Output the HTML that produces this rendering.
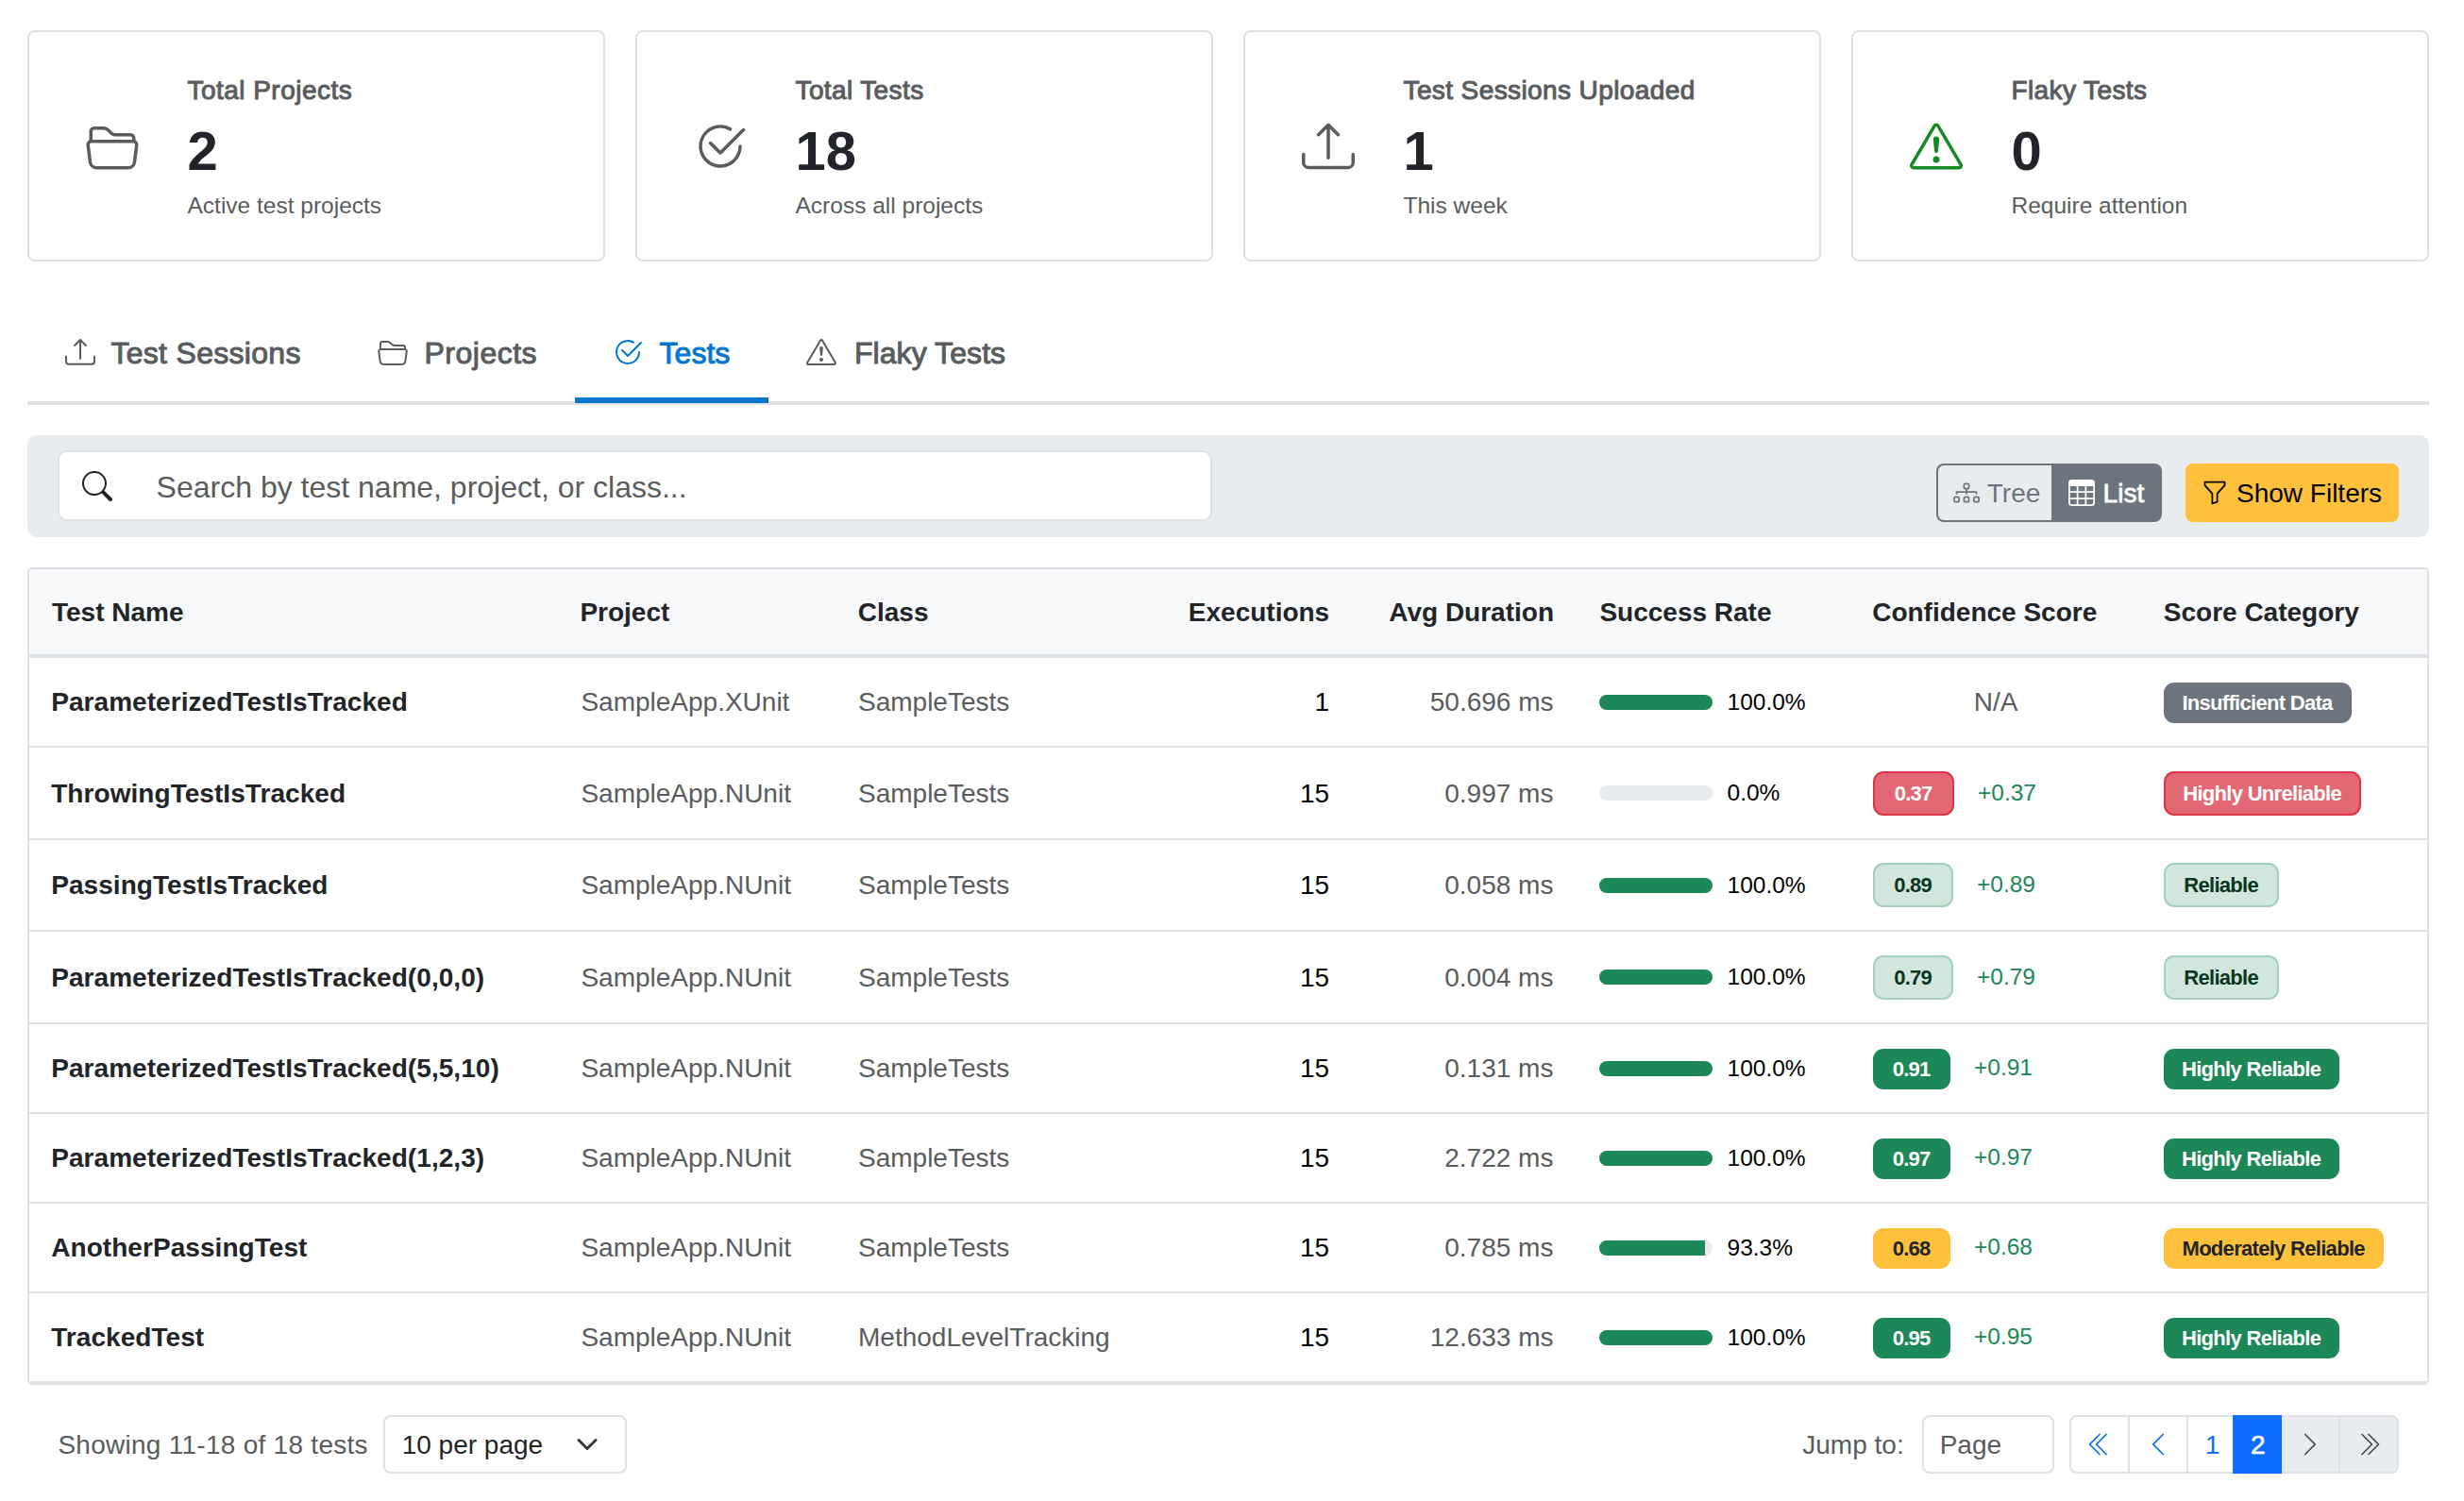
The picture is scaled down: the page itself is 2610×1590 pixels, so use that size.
<!DOCTYPE html>
<html><head><meta charset="utf-8"><title>Tests</title>
<style>
html,body{margin:0;padding:0;background:#fff;overflow:hidden;}
body{width:2610px;height:1590px;position:relative;overflow:hidden;font-family:"Liberation Sans",sans-serif;}
.t{position:absolute;white-space:nowrap;}
.r{position:absolute;}
.i{position:absolute;display:block;}
</style></head><body>
<div class="r" style="left:29px;top:32px;width:612px;height:245px;background:#fff;border:2px solid #dee2e6;border-radius:8px;box-sizing:border-box;"></div>
<svg class="i" style="left:91.00px;top:127.00px" width="56" height="56" viewBox="0 0 16 16" fill="#595c5f"><path d="M1 3.5A1.5 1.5 0 0 1 2.5 2h2.764c.958 0 1.76.56 2.311 1.184C7.985 3.648 8.48 4 9 4h4.5A1.5 1.5 0 0 1 15 5.5v.64c.57.265.94.876.856 1.546l-.64 5.124A2.5 2.5 0 0 1 12.733 15H3.266a2.5 2.5 0 0 1-2.481-2.19l-.64-5.124A1.5 1.5 0 0 1 1 6.14zM2 6h12v-.5a.5.5 0 0 0-.5-.5H9c-.964 0-1.71-.629-2.174-1.154C6.374 3.334 5.82 3 5.264 3H2.5a.5.5 0 0 0-.5.5zm-.367 1a.5.5 0 0 0-.496.562l.64 5.124A1.5 1.5 0 0 0 3.266 14h9.468a1.5 1.5 0 0 0 1.489-1.314l.64-5.124A.5.5 0 0 0 14.367 7z"/></svg>
<div class="t" style="left:198.50px;top:82.10px;font-size:28px;line-height:28px;font-weight:400;color:#595c5f;letter-spacing:0.466px;-webkit-text-stroke:1.0px #595c5f;">Total Projects</div>
<div class="t" style="left:198.50px;top:130.80px;font-size:58px;line-height:58px;font-weight:700;color:#212529;">2</div>
<div class="t" style="left:198.50px;top:206.46px;font-size:24.5px;line-height:24.5px;font-weight:400;color:#595c5f;">Active test projects</div>
<div class="r" style="left:673px;top:32px;width:612px;height:245px;background:#fff;border:2px solid #dee2e6;border-radius:8px;box-sizing:border-box;"></div>
<svg class="i" style="left:735.00px;top:127.00px" width="56" height="56" viewBox="0 0 16 16" fill="#595c5f"><path d="M2.5 8a5.5 5.5 0 0 1 8.25-4.764.5.5 0 0 0 .5-.866A6.5 6.5 0 1 0 14.5 8a.5.5 0 0 0-1 0 5.5 5.5 0 1 1-11 0"/><path d="M15.354 3.354a.5.5 0 0 0-.708-.708L8 9.293 5.354 6.646a.5.5 0 1 0-.708.708l3 3a.5.5 0 0 0 .708 0z"/></svg>
<div class="t" style="left:842.50px;top:82.10px;font-size:28px;line-height:28px;font-weight:400;color:#595c5f;letter-spacing:0.386px;-webkit-text-stroke:1.0px #595c5f;">Total Tests</div>
<div class="t" style="left:842.50px;top:130.80px;font-size:58px;line-height:58px;font-weight:700;color:#212529;">18</div>
<div class="t" style="left:842.50px;top:206.46px;font-size:24.5px;line-height:24.5px;font-weight:400;color:#595c5f;">Across all projects</div>
<div class="r" style="left:1317px;top:32px;width:612px;height:245px;background:#fff;border:2px solid #dee2e6;border-radius:8px;box-sizing:border-box;"></div>
<svg class="i" style="left:1379.00px;top:127.00px" width="56" height="56" viewBox="0 0 16 16" fill="#595c5f"><path d="M.5 9.9a.5.5 0 0 1 .5.5v2.5a1 1 0 0 0 1 1h12a1 1 0 0 0 1-1v-2.5a.5.5 0 0 1 1 0v2.5a2 2 0 0 1-2 2H2a2 2 0 0 1-2-2v-2.5a.5.5 0 0 1 .5-.5"/><path d="M7.646 1.146a.5.5 0 0 1 .708 0l3 3a.5.5 0 0 1-.708.708L8.5 2.707V11.5a.5.5 0 0 1-1 0V2.707L5.354 4.854a.5.5 0 1 1-.708-.708z"/></svg>
<div class="t" style="left:1486.50px;top:82.10px;font-size:28px;line-height:28px;font-weight:400;color:#595c5f;letter-spacing:0.398px;-webkit-text-stroke:1.0px #595c5f;">Test Sessions Uploaded</div>
<div class="t" style="left:1486.50px;top:130.80px;font-size:58px;line-height:58px;font-weight:700;color:#212529;">1</div>
<div class="t" style="left:1486.50px;top:206.46px;font-size:24.5px;line-height:24.5px;font-weight:400;color:#595c5f;">This week</div>
<div class="r" style="left:1961px;top:32px;width:612px;height:245px;background:#fff;border:2px solid #dee2e6;border-radius:8px;box-sizing:border-box;"></div>
<svg class="i" style="left:2023.00px;top:127.00px" width="56" height="56" viewBox="0 0 16 16" fill="#138a22"><path d="M7.938 2.016A.13.13 0 0 1 8.002 2a.13.13 0 0 1 .063.016.15.15 0 0 1 .054.057l6.857 11.667c.036.06.035.124.002.183a.2.2 0 0 1-.054.06.1.1 0 0 1-.066.017H1.146a.1.1 0 0 1-.066-.017.2.2 0 0 1-.054-.06.18.18 0 0 1 .002-.183L7.884 2.073a.15.15 0 0 1 .054-.057m1.044-.45a1.13 1.13 0 0 0-1.96 0L.165 13.233c-.457.778.091 1.767.98 1.767h13.713c.889 0 1.438-.99.98-1.767z"/><path d="M7.002 12a1 1 0 1 1 2 0 1 1 0 0 1-2 0M7.1 5.995a.905.905 0 1 1 1.8 0l-.35 3.507a.552.552 0 0 1-1.1 0z"/></svg>
<div class="t" style="left:2130.50px;top:82.10px;font-size:28px;line-height:28px;font-weight:400;color:#595c5f;letter-spacing:0.4px;-webkit-text-stroke:1.0px #595c5f;">Flaky Tests</div>
<div class="t" style="left:2130.50px;top:130.80px;font-size:58px;line-height:58px;font-weight:700;color:#212529;">0</div>
<div class="t" style="left:2130.50px;top:206.46px;font-size:24.5px;line-height:24.5px;font-weight:400;color:#595c5f;">Require attention</div>
<div class="r" style="left:29px;top:425px;width:2544px;height:4px;background:#dee2e6;border-radius:0;"></div>
<svg class="i" style="left:69.00px;top:357.00px" width="32" height="32" viewBox="0 0 16 16" fill="#595c5f"><path d="M.5 9.9a.5.5 0 0 1 .5.5v2.5a1 1 0 0 0 1 1h12a1 1 0 0 0 1-1v-2.5a.5.5 0 0 1 1 0v2.5a2 2 0 0 1-2 2H2a2 2 0 0 1-2-2v-2.5a.5.5 0 0 1 .5-.5"/><path d="M7.646 1.146a.5.5 0 0 1 .708 0l3 3a.5.5 0 0 1-.708.708L8.5 2.707V11.5a.5.5 0 0 1-1 0V2.707L5.354 4.854a.5.5 0 1 1-.708-.708z"/></svg>
<div class="t" style="left:117.40px;top:358.21px;font-size:32px;line-height:32px;font-weight:400;color:#595c5f;letter-spacing:0.305px;-webkit-text-stroke:1.0px #595c5f;">Test Sessions</div>
<svg class="i" style="left:399.70px;top:357.00px" width="32" height="32" viewBox="0 0 16 16" fill="#595c5f"><path d="M1 3.5A1.5 1.5 0 0 1 2.5 2h2.764c.958 0 1.76.56 2.311 1.184C7.985 3.648 8.48 4 9 4h4.5A1.5 1.5 0 0 1 15 5.5v.64c.57.265.94.876.856 1.546l-.64 5.124A2.5 2.5 0 0 1 12.733 15H3.266a2.5 2.5 0 0 1-2.481-2.19l-.64-5.124A1.5 1.5 0 0 1 1 6.14zM2 6h12v-.5a.5.5 0 0 0-.5-.5H9c-.964 0-1.71-.629-2.174-1.154C6.374 3.334 5.82 3 5.264 3H2.5a.5.5 0 0 0-.5.5zm-.367 1a.5.5 0 0 0-.496.562l.64 5.124A1.5 1.5 0 0 0 3.266 14h9.468a1.5 1.5 0 0 0 1.489-1.314l.64-5.124A.5.5 0 0 0 14.367 7z"/></svg>
<div class="t" style="left:449.50px;top:358.21px;font-size:32px;line-height:32px;font-weight:400;color:#595c5f;letter-spacing:0.497px;-webkit-text-stroke:1.0px #595c5f;">Projects</div>
<svg class="i" style="left:649.40px;top:357.00px" width="32" height="32" viewBox="0 0 16 16" fill="#0377d0"><path d="M2.5 8a5.5 5.5 0 0 1 8.25-4.764.5.5 0 0 0 .5-.866A6.5 6.5 0 1 0 14.5 8a.5.5 0 0 0-1 0 5.5 5.5 0 1 1-11 0"/><path d="M15.354 3.354a.5.5 0 0 0-.708-.708L8 9.293 5.354 6.646a.5.5 0 1 0-.708.708l3 3a.5.5 0 0 0 .708 0z"/></svg>
<div class="t" style="left:698.50px;top:358.21px;font-size:32px;line-height:32px;font-weight:400;color:#0377d0;letter-spacing:0.045px;-webkit-text-stroke:1.0px #0377d0;">Tests</div>
<svg class="i" style="left:854.40px;top:357.00px" width="32" height="32" viewBox="0 0 16 16" fill="#595c5f"><path d="M7.938 2.016A.13.13 0 0 1 8.002 2a.13.13 0 0 1 .063.016.15.15 0 0 1 .054.057l6.857 11.667c.036.06.035.124.002.183a.2.2 0 0 1-.054.06.1.1 0 0 1-.066.017H1.146a.1.1 0 0 1-.066-.017.2.2 0 0 1-.054-.06.18.18 0 0 1 .002-.183L7.884 2.073a.15.15 0 0 1 .054-.057m1.044-.45a1.13 1.13 0 0 0-1.96 0L.165 13.233c-.457.778.091 1.767.98 1.767h13.713c.889 0 1.438-.99.98-1.767z"/><path d="M7.002 12a1 1 0 1 1 2 0 1 1 0 0 1-2 0M7.1 5.995a.905.905 0 1 1 1.8 0l-.35 3.507a.552.552 0 0 1-1.1 0z"/></svg>
<div class="t" style="left:904.90px;top:358.21px;font-size:32px;line-height:32px;font-weight:400;color:#595c5f;letter-spacing:0.078px;-webkit-text-stroke:1.0px #595c5f;">Flaky Tests</div>
<div class="r" style="left:609px;top:421px;width:205px;height:6px;background:#0377d0;border-radius:0;"></div>
<div class="r" style="left:29px;top:461px;width:2544px;height:108px;background:#e9ecef;border-radius:10px;"></div>
<div class="r" style="left:61px;top:477px;width:1223px;height:75px;background:#fff;border:2px solid #dee2e6;border-radius:10px;box-sizing:border-box;"></div>
<svg class="i" style="left:86.90px;top:498.70px" width="32" height="32" viewBox="0 0 16 16" fill="#212529"><path d="M11.742 10.344a6.5 6.5 0 1 0-1.397 1.398h-.001q.044.06.098.115l3.85 3.85a1 1 0 0 0 1.415-1.414l-3.85-3.85a1 1 0 0 0-.115-.1zM12 6.5a5.5 5.5 0 1 1-11 0 5.5 5.5 0 0 1 11 0"/></svg>
<div class="t" style="left:165.60px;top:499.51px;font-size:32px;line-height:32px;font-weight:400;color:#595c5f;">Search by test name, project, or class...</div>
<div class="r" style="left:2051px;top:491px;width:122px;height:62px;background:transparent;border:2px solid #6c757d;border-radius:8px 0 0 8px;box-sizing:border-box;border-right:none;"></div>
<div class="r" style="left:2173px;top:491px;width:117px;height:62px;background:#6c757d;border-radius:0 8px 8px 0;"></div>
<svg class="i" style="left:2069.00px;top:508.00px" width="28" height="28" viewBox="0 0 16 16" fill="#6c757d"><path fill-rule="evenodd" d="M6 3.5A1.5 1.5 0 0 1 7.5 2h1A1.5 1.5 0 0 1 10 3.5v1A1.5 1.5 0 0 1 8.5 6v1H14a.5.5 0 0 1 .5.5v1a.5.5 0 0 1-1 0V8h-5v.5a.5.5 0 0 1-1 0V8h-5v.5a.5.5 0 0 1-1 0v-1A.5.5 0 0 1 2 7h5.5V6A1.5 1.5 0 0 1 6 4.5zM8.5 5a.5.5 0 0 0 .5-.5v-1a.5.5 0 0 0-.5-.5h-1a.5.5 0 0 0-.5.5v1a.5.5 0 0 0 .5.5zM0 11.5A1.5 1.5 0 0 1 1.5 10h1A1.5 1.5 0 0 1 4 11.5v1A1.5 1.5 0 0 1 2.5 14h-1A1.5 1.5 0 0 1 0 12.5zm1.5-.5a.5.5 0 0 0-.5.5v1a.5.5 0 0 0 .5.5h1a.5.5 0 0 0 .5-.5v-1a.5.5 0 0 0-.5-.5zm4.5.5A1.5 1.5 0 0 1 7.5 10h1a1.5 1.5 0 0 1 1.5 1.5v1A1.5 1.5 0 0 1 8.5 14h-1A1.5 1.5 0 0 1 6 12.5zm1.5-.5a.5.5 0 0 0-.5.5v1a.5.5 0 0 0 .5.5h1a.5.5 0 0 0 .5-.5v-1a.5.5 0 0 0-.5-.5zm4.5.5a1.5 1.5 0 0 1 1.5-1.5h1a1.5 1.5 0 0 1 1.5 1.5v1a1.5 1.5 0 0 1-1.5 1.5h-1a1.5 1.5 0 0 1-1.5-1.5zm1.5-.5a.5.5 0 0 0-.5.5v1a.5.5 0 0 0 .5.5h1a.5.5 0 0 0 .5-.5v-1a.5.5 0 0 0-.5-.5z"/></svg>
<div class="t" style="left:2104.80px;top:508.70px;font-size:28px;line-height:28px;font-weight:400;color:#6c757d;">Tree</div>
<svg class="i" style="left:2191.10px;top:507.90px" width="28" height="28" viewBox="0 0 16 16" fill="#fff"><path d="M0 2a2 2 0 0 1 2-2h12a2 2 0 0 1 2 2v12a2 2 0 0 1-2 2H2a2 2 0 0 1-2-2zm15 2h-4v3h4zm0 4h-4v3h4zm0 4h-4v3h3a1 1 0 0 0 1-1zm-5 3v-3H6v3zm-5 0v-3H1v2a1 1 0 0 0 1 1zm-4-4h4V8H1zm0-4h4V4H1zm5-3v3h4V4zm4 4H6v3h4z"/></svg>
<div class="t" style="left:2227.60px;top:508.70px;font-size:28px;line-height:28px;font-weight:400;color:#fff;-webkit-text-stroke:0.8px #fff;">List</div>
<div class="r" style="left:2315px;top:491px;width:226px;height:62px;background:#ffc13b;border-radius:8px;"></div>
<svg class="i" style="left:2332.40px;top:508.10px" width="28" height="28" viewBox="0 0 16 16" fill="#000"><path d="M1.5 1.5A.5.5 0 0 1 2 1h12a.5.5 0 0 1 .5.5v2a.5.5 0 0 1-.128.334L10 8.692V13.5a.5.5 0 0 1-.342.474l-3 1A.5.5 0 0 1 6 14.5V8.692L1.628 3.834A.5.5 0 0 1 1.5 3.5zm1 .5v1.308l4.372 4.858A.5.5 0 0 1 7 8.5v5.306l2-.666V8.5a.5.5 0 0 1 .128-.334L13.5 3.308V2z"/></svg>
<div class="t" style="left:2369.00px;top:508.70px;font-size:28px;line-height:28px;font-weight:400;color:#000;">Show Filters</div>
<div class="r" style="left:29px;top:601px;width:2544px;height:866px;background:#fff;border:2px solid #dee2e6;border-radius:5px;box-sizing:border-box;overflow:hidden;"></div>
<div class="r" style="left:31px;top:603px;width:2540px;height:90px;background:#f8f9fa;border-radius:3px 3px 0 0;"></div>
<div class="r" style="left:31px;top:693px;width:2540px;height:4px;background:#dee2e6;border-radius:0;"></div>
<div class="t" style="left:55.00px;top:634.90px;font-size:28px;line-height:28px;font-weight:700;color:#212529;">Test Name</div>
<div class="t" style="left:614.40px;top:634.90px;font-size:28px;line-height:28px;font-weight:700;color:#212529;">Project</div>
<div class="t" style="left:908.80px;top:634.90px;font-size:28px;line-height:28px;font-weight:700;color:#212529;">Class</div>
<div class="t" style="left:1258.82px;top:634.90px;font-size:28px;line-height:28px;font-weight:700;color:#212529;">Executions</div>
<div class="t" style="left:1471.28px;top:634.90px;font-size:28px;line-height:28px;font-weight:700;color:#212529;">Avg Duration</div>
<div class="t" style="left:1694.40px;top:634.90px;font-size:28px;line-height:28px;font-weight:700;color:#212529;">Success Rate</div>
<div class="t" style="left:1983.20px;top:634.90px;font-size:28px;line-height:28px;font-weight:700;color:#212529;">Confidence Score</div>
<div class="t" style="left:2291.80px;top:634.90px;font-size:28px;line-height:28px;font-weight:700;color:#212529;">Score Category</div>
<div class="t" style="left:54.20px;top:730.40px;font-size:28px;line-height:28px;font-weight:700;color:#212529;letter-spacing:0.06px;">ParameterizedTestIsTracked</div>
<div class="t" style="left:615.40px;top:730.40px;font-size:28px;line-height:28px;font-weight:400;color:#595c5f;">SampleApp.XUnit</div>
<div class="t" style="left:909.00px;top:730.40px;font-size:28px;line-height:28px;font-weight:400;color:#595c5f;">SampleTests</div>
<div class="t" style="left:1392.46px;top:730.40px;font-size:28px;line-height:28px;font-weight:400;color:#000;">1</div>
<div class="t" style="left:1514.74px;top:730.40px;font-size:28px;line-height:28px;font-weight:400;color:#595c5f;">50.696 ms</div>
<div class="r" style="left:1694px;top:735.5px;width:120px;height:16px;background:#e9ecef;border-radius:8px;overflow:hidden;"></div>
<div class="r" style="left:1694px;top:735.5px;width:120.0px;height:16px;background:#1c8858;border-radius:8px;"></div>
<div class="t" style="left:1829.50px;top:731.96px;font-size:24.5px;line-height:24.5px;font-weight:400;color:#000;">100.0%</div>
<div class="t" style="left:2090.82px;top:730.40px;font-size:28px;line-height:28px;font-weight:400;color:#595c5f;">N/A</div>
<div class="r" style="left:2292px;top:723.0px;width:199px;height:43px;background:#6c757d;border-radius:11px;box-sizing:border-box;"></div>
<div class="t" style="left:2311.41px;top:734.48px;font-size:22px;line-height:22px;font-weight:700;color:#fff;letter-spacing:-0.7px;">Insufficient Data</div>
<div class="r" style="left:31px;top:790px;width:2540px;height:2px;background:#dee2e6;border-radius:0;"></div>
<div class="t" style="left:54.20px;top:826.90px;font-size:28px;line-height:28px;font-weight:700;color:#212529;letter-spacing:0.06px;">ThrowingTestIsTracked</div>
<div class="t" style="left:615.40px;top:826.90px;font-size:28px;line-height:28px;font-weight:400;color:#595c5f;">SampleApp.NUnit</div>
<div class="t" style="left:909.00px;top:826.90px;font-size:28px;line-height:28px;font-weight:400;color:#595c5f;">SampleTests</div>
<div class="t" style="left:1376.92px;top:826.90px;font-size:28px;line-height:28px;font-weight:400;color:#000;">15</div>
<div class="t" style="left:1530.28px;top:826.90px;font-size:28px;line-height:28px;font-weight:400;color:#595c5f;">0.997 ms</div>
<div class="r" style="left:1694px;top:832.0px;width:120px;height:16px;background:#e9ecef;border-radius:8px;overflow:hidden;"></div>
<div class="t" style="left:1829.50px;top:828.46px;font-size:24.5px;line-height:24.5px;font-weight:400;color:#000;">0.0%</div>
<div class="r" style="left:1984px;top:816.5px;width:86px;height:47px;background:#e46874;border:2px solid #dc3545;border-radius:11px;box-sizing:border-box;"></div>
<div class="t" style="left:2006.65px;top:829.98px;font-size:22px;line-height:22px;font-weight:700;color:#fff;letter-spacing:-0.7px;">0.37</div>
<div class="t" style="left:2095.00px;top:827.86px;font-size:24.5px;line-height:24.5px;font-weight:400;color:#1c8858;">+0.37</div>
<div class="r" style="left:2292px;top:816.5px;width:209px;height:47px;background:#e46874;border:2px solid #dc3545;border-radius:11px;box-sizing:border-box;"></div>
<div class="t" style="left:2312.23px;top:829.98px;font-size:22px;line-height:22px;font-weight:700;color:#fff;letter-spacing:-0.7px;">Highly Unreliable</div>
<div class="r" style="left:31px;top:888px;width:2540px;height:2px;background:#dee2e6;border-radius:0;"></div>
<div class="t" style="left:54.20px;top:924.40px;font-size:28px;line-height:28px;font-weight:700;color:#212529;letter-spacing:0.06px;">PassingTestIsTracked</div>
<div class="t" style="left:615.40px;top:924.40px;font-size:28px;line-height:28px;font-weight:400;color:#595c5f;">SampleApp.NUnit</div>
<div class="t" style="left:909.00px;top:924.40px;font-size:28px;line-height:28px;font-weight:400;color:#595c5f;">SampleTests</div>
<div class="t" style="left:1376.92px;top:924.40px;font-size:28px;line-height:28px;font-weight:400;color:#000;">15</div>
<div class="t" style="left:1530.28px;top:924.40px;font-size:28px;line-height:28px;font-weight:400;color:#595c5f;">0.058 ms</div>
<div class="r" style="left:1694px;top:929.5px;width:120px;height:16px;background:#e9ecef;border-radius:8px;overflow:hidden;"></div>
<div class="r" style="left:1694px;top:929.5px;width:120.0px;height:16px;background:#1c8858;border-radius:8px;"></div>
<div class="t" style="left:1829.50px;top:925.96px;font-size:24.5px;line-height:24.5px;font-weight:400;color:#000;">100.0%</div>
<div class="r" style="left:1984px;top:914.0px;width:85px;height:47px;background:#d1e7dd;border:2px solid #a3cfbb;border-radius:11px;box-sizing:border-box;"></div>
<div class="t" style="left:2006.15px;top:927.48px;font-size:22px;line-height:22px;font-weight:700;color:#0a3622;letter-spacing:-0.7px;">0.89</div>
<div class="t" style="left:2094.00px;top:925.36px;font-size:24.5px;line-height:24.5px;font-weight:400;color:#1c8858;">+0.89</div>
<div class="r" style="left:2292px;top:914.0px;width:122px;height:47px;background:#d1e7dd;border:2px solid #a3cfbb;border-radius:11px;box-sizing:border-box;"></div>
<div class="t" style="left:2313.26px;top:927.48px;font-size:22px;line-height:22px;font-weight:700;color:#0a3622;letter-spacing:-0.7px;">Reliable</div>
<div class="r" style="left:31px;top:985px;width:2540px;height:2px;background:#dee2e6;border-radius:0;"></div>
<div class="t" style="left:54.20px;top:1021.90px;font-size:28px;line-height:28px;font-weight:700;color:#212529;letter-spacing:0.06px;">ParameterizedTestIsTracked(0,0,0)</div>
<div class="t" style="left:615.40px;top:1021.90px;font-size:28px;line-height:28px;font-weight:400;color:#595c5f;">SampleApp.NUnit</div>
<div class="t" style="left:909.00px;top:1021.90px;font-size:28px;line-height:28px;font-weight:400;color:#595c5f;">SampleTests</div>
<div class="t" style="left:1376.92px;top:1021.90px;font-size:28px;line-height:28px;font-weight:400;color:#000;">15</div>
<div class="t" style="left:1530.28px;top:1021.90px;font-size:28px;line-height:28px;font-weight:400;color:#595c5f;">0.004 ms</div>
<div class="r" style="left:1694px;top:1027.0px;width:120px;height:16px;background:#e9ecef;border-radius:8px;overflow:hidden;"></div>
<div class="r" style="left:1694px;top:1027.0px;width:120.0px;height:16px;background:#1c8858;border-radius:8px;"></div>
<div class="t" style="left:1829.50px;top:1023.46px;font-size:24.5px;line-height:24.5px;font-weight:400;color:#000;">100.0%</div>
<div class="r" style="left:1984px;top:1011.5px;width:85px;height:47px;background:#d1e7dd;border:2px solid #a3cfbb;border-radius:11px;box-sizing:border-box;"></div>
<div class="t" style="left:2006.15px;top:1024.98px;font-size:22px;line-height:22px;font-weight:700;color:#0a3622;letter-spacing:-0.7px;">0.79</div>
<div class="t" style="left:2094.00px;top:1022.86px;font-size:24.5px;line-height:24.5px;font-weight:400;color:#1c8858;">+0.79</div>
<div class="r" style="left:2292px;top:1011.5px;width:122px;height:47px;background:#d1e7dd;border:2px solid #a3cfbb;border-radius:11px;box-sizing:border-box;"></div>
<div class="t" style="left:2313.26px;top:1024.98px;font-size:22px;line-height:22px;font-weight:700;color:#0a3622;letter-spacing:-0.7px;">Reliable</div>
<div class="r" style="left:31px;top:1083px;width:2540px;height:2px;background:#dee2e6;border-radius:0;"></div>
<div class="t" style="left:54.20px;top:1118.40px;font-size:28px;line-height:28px;font-weight:700;color:#212529;letter-spacing:0.06px;">ParameterizedTestIsTracked(5,5,10)</div>
<div class="t" style="left:615.40px;top:1118.40px;font-size:28px;line-height:28px;font-weight:400;color:#595c5f;">SampleApp.NUnit</div>
<div class="t" style="left:909.00px;top:1118.40px;font-size:28px;line-height:28px;font-weight:400;color:#595c5f;">SampleTests</div>
<div class="t" style="left:1376.92px;top:1118.40px;font-size:28px;line-height:28px;font-weight:400;color:#000;">15</div>
<div class="t" style="left:1530.28px;top:1118.40px;font-size:28px;line-height:28px;font-weight:400;color:#595c5f;">0.131 ms</div>
<div class="r" style="left:1694px;top:1123.5px;width:120px;height:16px;background:#e9ecef;border-radius:8px;overflow:hidden;"></div>
<div class="r" style="left:1694px;top:1123.5px;width:120.0px;height:16px;background:#1c8858;border-radius:8px;"></div>
<div class="t" style="left:1829.50px;top:1119.96px;font-size:24.5px;line-height:24.5px;font-weight:400;color:#000;">100.0%</div>
<div class="r" style="left:1984px;top:1111.0px;width:82px;height:43px;background:#1c8858;border-radius:11px;box-sizing:border-box;"></div>
<div class="t" style="left:2004.65px;top:1122.48px;font-size:22px;line-height:22px;font-weight:700;color:#fff;letter-spacing:-0.7px;">0.91</div>
<div class="t" style="left:2091.00px;top:1119.36px;font-size:24.5px;line-height:24.5px;font-weight:400;color:#1c8858;">+0.91</div>
<div class="r" style="left:2292px;top:1111.0px;width:186px;height:43px;background:#1c8858;border-radius:11px;box-sizing:border-box;"></div>
<div class="t" style="left:2311.03px;top:1122.48px;font-size:22px;line-height:22px;font-weight:700;color:#fff;letter-spacing:-0.7px;">Highly Reliable</div>
<div class="r" style="left:31px;top:1178px;width:2540px;height:2px;background:#dee2e6;border-radius:0;"></div>
<div class="t" style="left:54.20px;top:1213.40px;font-size:28px;line-height:28px;font-weight:700;color:#212529;letter-spacing:0.06px;">ParameterizedTestIsTracked(1,2,3)</div>
<div class="t" style="left:615.40px;top:1213.40px;font-size:28px;line-height:28px;font-weight:400;color:#595c5f;">SampleApp.NUnit</div>
<div class="t" style="left:909.00px;top:1213.40px;font-size:28px;line-height:28px;font-weight:400;color:#595c5f;">SampleTests</div>
<div class="t" style="left:1376.92px;top:1213.40px;font-size:28px;line-height:28px;font-weight:400;color:#000;">15</div>
<div class="t" style="left:1530.28px;top:1213.40px;font-size:28px;line-height:28px;font-weight:400;color:#595c5f;">2.722 ms</div>
<div class="r" style="left:1694px;top:1218.5px;width:120px;height:16px;background:#e9ecef;border-radius:8px;overflow:hidden;"></div>
<div class="r" style="left:1694px;top:1218.5px;width:120.0px;height:16px;background:#1c8858;border-radius:8px;"></div>
<div class="t" style="left:1829.50px;top:1214.96px;font-size:24.5px;line-height:24.5px;font-weight:400;color:#000;">100.0%</div>
<div class="r" style="left:1984px;top:1206.0px;width:82px;height:43px;background:#1c8858;border-radius:11px;box-sizing:border-box;"></div>
<div class="t" style="left:2004.65px;top:1217.48px;font-size:22px;line-height:22px;font-weight:700;color:#fff;letter-spacing:-0.7px;">0.97</div>
<div class="t" style="left:2091.00px;top:1214.36px;font-size:24.5px;line-height:24.5px;font-weight:400;color:#1c8858;">+0.97</div>
<div class="r" style="left:2292px;top:1206.0px;width:186px;height:43px;background:#1c8858;border-radius:11px;box-sizing:border-box;"></div>
<div class="t" style="left:2311.03px;top:1217.48px;font-size:22px;line-height:22px;font-weight:700;color:#fff;letter-spacing:-0.7px;">Highly Reliable</div>
<div class="r" style="left:31px;top:1273px;width:2540px;height:2px;background:#dee2e6;border-radius:0;"></div>
<div class="t" style="left:54.20px;top:1308.40px;font-size:28px;line-height:28px;font-weight:700;color:#212529;letter-spacing:0.06px;">AnotherPassingTest</div>
<div class="t" style="left:615.40px;top:1308.40px;font-size:28px;line-height:28px;font-weight:400;color:#595c5f;">SampleApp.NUnit</div>
<div class="t" style="left:909.00px;top:1308.40px;font-size:28px;line-height:28px;font-weight:400;color:#595c5f;">SampleTests</div>
<div class="t" style="left:1376.92px;top:1308.40px;font-size:28px;line-height:28px;font-weight:400;color:#000;">15</div>
<div class="t" style="left:1530.28px;top:1308.40px;font-size:28px;line-height:28px;font-weight:400;color:#595c5f;">0.785 ms</div>
<div class="r" style="left:1694px;top:1313.5px;width:120px;height:16px;background:#e9ecef;border-radius:8px;overflow:hidden;"></div>
<div class="r" style="left:1694px;top:1313.5px;width:112.0px;height:16px;background:#1c8858;border-radius:8px 0 0 8px;"></div>
<div class="t" style="left:1829.50px;top:1309.96px;font-size:24.5px;line-height:24.5px;font-weight:400;color:#000;">93.3%</div>
<div class="r" style="left:1984px;top:1301.0px;width:82px;height:43px;background:#ffc13b;border-radius:11px;box-sizing:border-box;"></div>
<div class="t" style="left:2004.65px;top:1312.48px;font-size:22px;line-height:22px;font-weight:700;color:#212529;letter-spacing:-0.7px;">0.68</div>
<div class="t" style="left:2091.00px;top:1309.36px;font-size:24.5px;line-height:24.5px;font-weight:400;color:#1c8858;">+0.68</div>
<div class="r" style="left:2292px;top:1301.0px;width:233px;height:43px;background:#ffc13b;border-radius:11px;box-sizing:border-box;"></div>
<div class="t" style="left:2311.51px;top:1312.48px;font-size:22px;line-height:22px;font-weight:700;color:#212529;letter-spacing:-0.7px;">Moderately Reliable</div>
<div class="r" style="left:31px;top:1368px;width:2540px;height:2px;background:#dee2e6;border-radius:0;"></div>
<div class="t" style="left:54.20px;top:1403.40px;font-size:28px;line-height:28px;font-weight:700;color:#212529;letter-spacing:0.06px;">TrackedTest</div>
<div class="t" style="left:615.40px;top:1403.40px;font-size:28px;line-height:28px;font-weight:400;color:#595c5f;">SampleApp.NUnit</div>
<div class="t" style="left:909.00px;top:1403.40px;font-size:28px;line-height:28px;font-weight:400;color:#595c5f;">MethodLevelTracking</div>
<div class="t" style="left:1376.92px;top:1403.40px;font-size:28px;line-height:28px;font-weight:400;color:#000;">15</div>
<div class="t" style="left:1514.74px;top:1403.40px;font-size:28px;line-height:28px;font-weight:400;color:#595c5f;">12.633 ms</div>
<div class="r" style="left:1694px;top:1408.5px;width:120px;height:16px;background:#e9ecef;border-radius:8px;overflow:hidden;"></div>
<div class="r" style="left:1694px;top:1408.5px;width:120.0px;height:16px;background:#1c8858;border-radius:8px;"></div>
<div class="t" style="left:1829.50px;top:1404.96px;font-size:24.5px;line-height:24.5px;font-weight:400;color:#000;">100.0%</div>
<div class="r" style="left:1984px;top:1396.0px;width:82px;height:43px;background:#1c8858;border-radius:11px;box-sizing:border-box;"></div>
<div class="t" style="left:2004.65px;top:1407.48px;font-size:22px;line-height:22px;font-weight:700;color:#fff;letter-spacing:-0.7px;">0.95</div>
<div class="t" style="left:2091.00px;top:1404.36px;font-size:24.5px;line-height:24.5px;font-weight:400;color:#1c8858;">+0.95</div>
<div class="r" style="left:2292px;top:1396.0px;width:186px;height:43px;background:#1c8858;border-radius:11px;box-sizing:border-box;"></div>
<div class="t" style="left:2311.03px;top:1407.48px;font-size:22px;line-height:22px;font-weight:700;color:#fff;letter-spacing:-0.7px;">Highly Reliable</div>
<div class="r" style="left:31px;top:1463px;width:2540px;height:2px;background:#dee2e6;border-radius:0;"></div>
<div class="t" style="left:61.40px;top:1516.90px;font-size:28px;line-height:28px;font-weight:400;color:#595c5f;letter-spacing:0.27px;">Showing 11-18 of 18 tests</div>
<div class="r" style="left:406px;top:1499px;width:258px;height:62px;background:#fff;border:2px solid #dee2e6;border-radius:8px;box-sizing:border-box;"></div>
<div class="t" style="left:425.70px;top:1516.90px;font-size:28px;line-height:28px;font-weight:400;color:#212529;">10 per page</div>
<svg class="i" style="left:600px;top:1510px" width="40" height="40" viewBox="600 1510 40 40"><polyline points="613,1525.5 622,1534.5 631,1525.5" fill="none" stroke="#343a40" stroke-width="3" stroke-linecap="round" stroke-linejoin="round"/></svg>
<div class="t" style="left:1909.30px;top:1516.90px;font-size:28px;line-height:28px;font-weight:400;color:#595c5f;">Jump to:</div>
<div class="r" style="left:2036px;top:1499px;width:140px;height:62px;background:#fff;border:2px solid #dee2e6;border-radius:8px;box-sizing:border-box;"></div>
<div class="t" style="left:2054.70px;top:1516.90px;font-size:28px;line-height:28px;font-weight:400;color:#595c5f;">Page</div>
<div class="r" style="left:2192px;top:1499px;width:349px;height:62px;background:#fff;border:2px solid #dee2e6;border-radius:8px;box-sizing:border-box;overflow:hidden;"></div>
<div class="r" style="left:2417px;top:1501px;width:122px;height:58px;background:#e9ecef;border-radius:0 6px 6px 0;"></div>
<div class="r" style="left:2365px;top:1499px;width:52px;height:62px;background:#0d6efd;border-radius:0;"></div>
<div class="r" style="left:2254px;top:1501px;width:2px;height:58px;background:#dee2e6;border-radius:0;"></div>
<div class="r" style="left:2316px;top:1501px;width:2px;height:58px;background:#dee2e6;border-radius:0;"></div>
<div class="r" style="left:2477px;top:1501px;width:2px;height:58px;background:#dee2e6;border-radius:0;"></div>
<svg class="i" style="left:2210.20px;top:1516.00px" width="28" height="28" viewBox="0 0 16 16" fill="#0d6efd"><path fill-rule="evenodd" d="M8.354 1.646a.5.5 0 0 1 0 .708L2.707 8l5.647 5.646a.5.5 0 0 1-.708.708l-6-6a.5.5 0 0 1 0-.708l6-6a.5.5 0 0 1 .708 0"/><path fill-rule="evenodd" d="M12.354 1.646a.5.5 0 0 1 0 .708L6.707 8l5.647 5.646a.5.5 0 0 1-.708.708l-6-6a.5.5 0 0 1 0-.708l6-6a.5.5 0 0 1 .708 0"/></svg>
<svg class="i" style="left:2271.60px;top:1516.00px" width="28" height="28" viewBox="0 0 16 16" fill="#0d6efd"><path fill-rule="evenodd" d="M11.354 1.646a.5.5 0 0 1 0 .708L5.707 8l5.647 5.646a.5.5 0 0 1-.708.708l-6-6a.5.5 0 0 1 0-.708l6-6a.5.5 0 0 1 .708 0"/></svg>
<div class="t" style="left:2335.70px;top:1516.90px;font-size:28px;line-height:28px;font-weight:400;color:#0d6efd;">1</div>
<div class="t" style="left:2383.90px;top:1516.90px;font-size:28px;line-height:28px;font-weight:400;color:#fff;-webkit-text-stroke:0.6px #fff;">2</div>
<svg class="i" style="left:2432.90px;top:1516.00px" width="28" height="28" viewBox="0 0 16 16" fill="#495057"><path fill-rule="evenodd" d="M4.646 1.646a.5.5 0 0 1 .708 0l6 6a.5.5 0 0 1 0 .708l-6 6a.5.5 0 0 1-.708-.708L10.293 8 4.646 2.354a.5.5 0 0 1 0-.708"/></svg>
<svg class="i" style="left:2494.60px;top:1516.00px" width="28" height="28" viewBox="0 0 16 16" fill="#495057"><path fill-rule="evenodd" d="M3.646 1.646a.5.5 0 0 1 .708 0l6 6a.5.5 0 0 1 0 .708l-6 6a.5.5 0 0 1-.708-.708L9.293 8 3.646 2.354a.5.5 0 0 1 0-.708"/><path fill-rule="evenodd" d="M7.646 1.646a.5.5 0 0 1 .708 0l6 6a.5.5 0 0 1 0 .708l-6 6a.5.5 0 0 1-.708-.708L13.293 8 7.646 2.354a.5.5 0 0 1 0-.708"/></svg>
</body></html>
